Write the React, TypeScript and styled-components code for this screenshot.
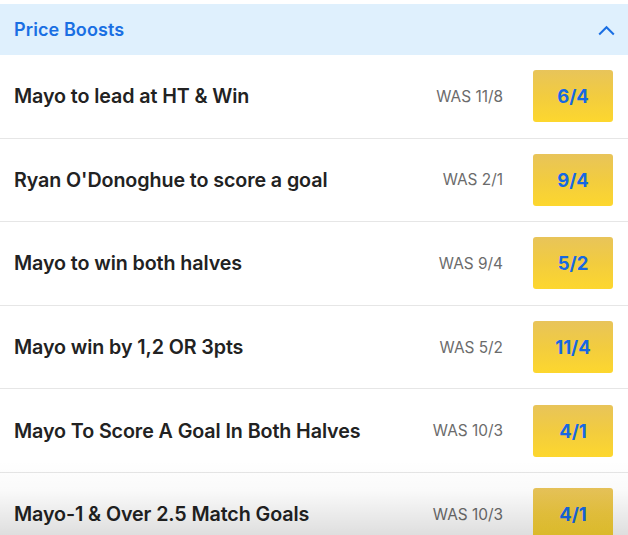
import React from "react";
import styled, { createGlobalStyle } from "styled-components";

const Global = createGlobalStyle`
  html, body { margin: 0; padding: 0; background: #fff; }
  body { font-family: Inter, "Noto Sans", sans-serif; -webkit-font-smoothing: antialiased; }
`;

const Page = styled.div`
  position: relative;
  width: 628px;
  height: 535px;
  overflow: hidden;
  padding-top: 4px;
  box-sizing: border-box;
  background: #fff;
`;

const Header = styled.div`
  height: 51px;
  background: #dff0fd;
  display: flex;
  align-items: center;
  justify-content: space-between;
  padding: 0 13px 0 14px;
`;

const Title = styled.div`
  color: #1a6fe3;
  font-size: 18px;
  font-weight: 600;
  letter-spacing: 0.1px;
`;

const Chevron = styled.svg`
  width: 17px;
  height: 17px;
  margin-top: 2px;
`;

const Row = styled.div`
  height: 83.6px;
  display: flex;
  align-items: center;
  padding: 0 15px 0 14px;
  border-bottom: 1px solid #e6e6e6;
  box-sizing: border-box;
  &:first-of-type { height: 84.5px; }
`;

const Name = styled.div`
  flex: 1;
  font-size: 19.7px;
  font-weight: 600;
  color: #222;
  letter-spacing: -0.1px;
`;

const Was = styled.div`
  font-size: 15.4px;
  color: #6b6b6b;
  margin-right: 30px;
`;

const Odds = styled.div`
  width: 80px;
  height: 52px;
  border-radius: 3px;
  background: linear-gradient(180deg, #e8c45a 0%, #f2cc3f 50%, #fdd72e 100%);
  display: flex;
  align-items: center;
  justify-content: center;
  color: #1668e3;
  font-size: 18.5px;
  font-weight: 700;
`;

const Fade = styled.div`
  position: absolute;
  left: 0;
  right: 0;
  bottom: 0;
  height: 75px;
  pointer-events: none;
  background: linear-gradient(180deg, rgba(255,255,255,0) 0%, rgba(0,0,0,0.02) 40%, rgba(0,0,0,0.13) 100%);
`;

const boosts = [
  { name: "Mayo to lead at HT & Win", was: "WAS 11/8", odds: "6/4" },
  { name: "Ryan O'Donoghue to score a goal", was: "WAS 2/1", odds: "9/4" },
  { name: "Mayo to win both halves", was: "WAS 9/4", odds: "5/2" },
  { name: "Mayo win by 1,2 OR 3pts", was: "WAS 5/2", odds: "11/4" },
  { name: "Mayo To Score A Goal In Both Halves", was: "WAS 10/3", odds: "4/1" },
  { name: "Mayo-1 & Over 2.5 Match Goals", was: "WAS 10/3", odds: "4/1" },
];

export default function App() {
  return (
    <>
      <Global />
      <Page>
        <Header>
          <Title>Price Boosts</Title>
          <Chevron viewBox="0 0 17 17">
            <path d="M1.2 12.5 L8.5 5.2 L15.8 12.5" fill="none" stroke="#1a6fe3" strokeWidth="2" />
          </Chevron>
        </Header>
        {boosts.map((b, i) => (
          <Row key={i}>
            <Name>{b.name}</Name>
            <Was>{b.was}</Was>
            <Odds>{b.odds}</Odds>
          </Row>
        ))}
        <Fade />
      </Page>
    </>
  );
}
